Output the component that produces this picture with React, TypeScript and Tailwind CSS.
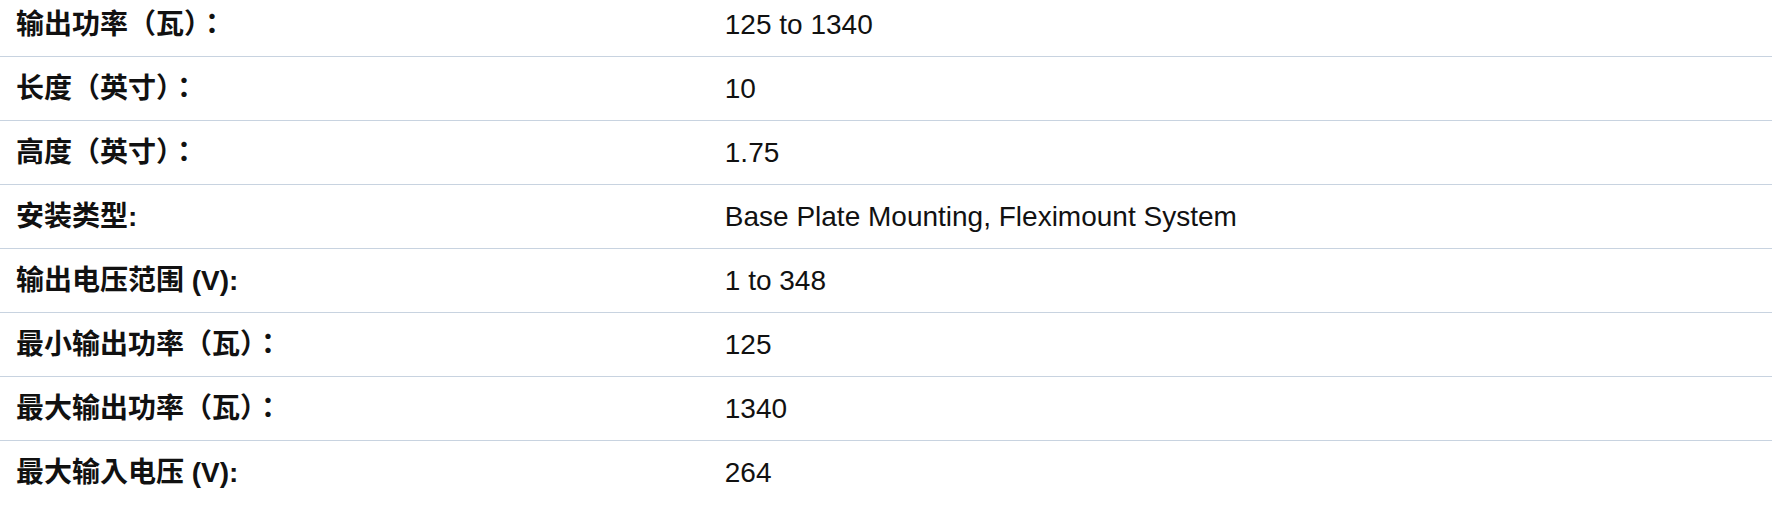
import React from "react";

const rows: [string, string][] = [
  ["输出功率（瓦）：", "125 to 1340"],
  ["长度（英寸）：", "10"],
  ["高度（英寸）：", "1.75"],
  ["安装类型:", "Base Plate Mounting, Fleximount System"],
  ["输出电压范围 (V):", "1 to 348"],
  ["最小输出功率（瓦）：", "125"],
  ["最大输出功率（瓦）：", "1340"],
  ["最大输入电压 (V):", "264"],
];

export default function App() {
  return (
    <div className="w-[1772px] h-[524px] overflow-hidden bg-white text-[#111] font-['Liberation_Sans','Noto_Sans_CJK_TC',sans-serif]">
      <div className="-mt-[7px]">
        {rows.map(([label, value], i) => (
          <div
            key={i}
            className={`flex items-center h-[64px] ${i < rows.length - 1 ? "border-b border-[#c8d3e0]" : ""}`}
          >
            <div className="w-[40%] pl-4 text-[28px] font-bold leading-none">{label}</div>
            <div className="flex-1 pl-4 text-[28px] leading-none">{value}</div>
          </div>
        ))}
      </div>
    </div>
  );
}
